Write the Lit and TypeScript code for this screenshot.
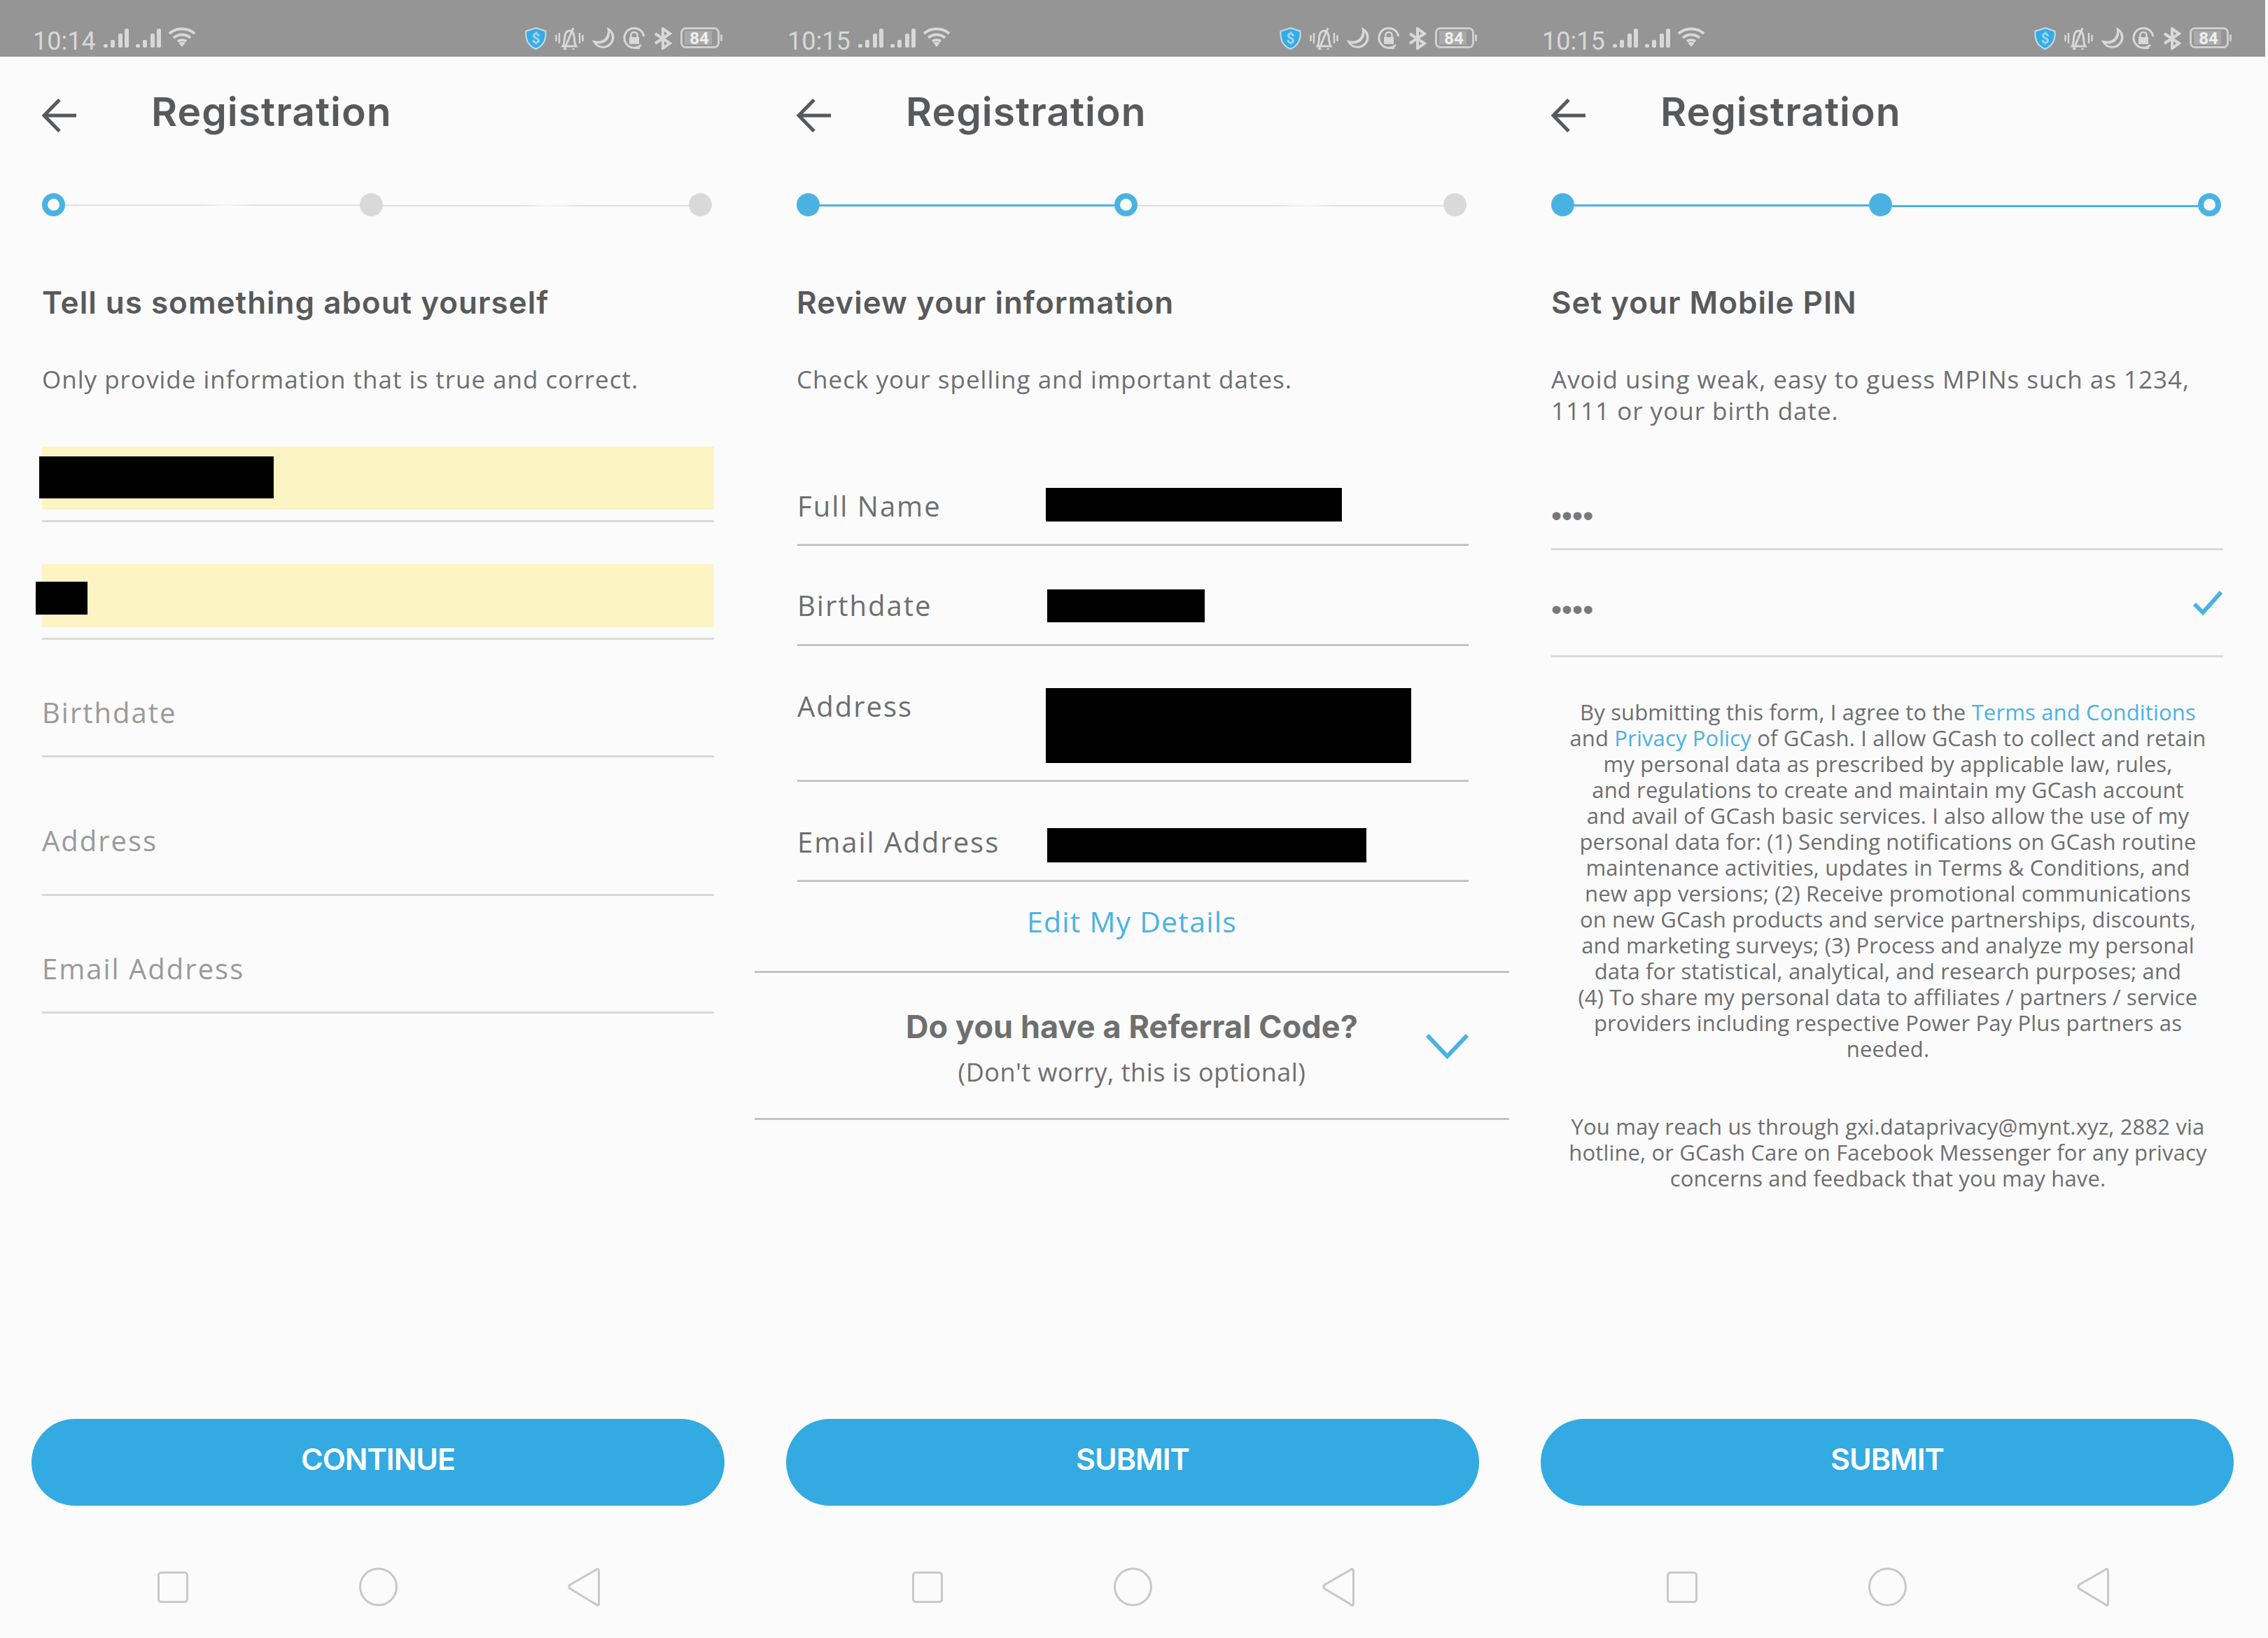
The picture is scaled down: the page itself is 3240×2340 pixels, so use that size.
import { LitElement, html, svg, css } from 'lit';
import { customElement } from 'lit/decorators.js';

interface ReviewRow {
  label: string;
  height: number;
  labelTop: number;
  barLeft: number;
  barTop: number;
  barWidth: number;
  barHeight: number;
}

const REVIEW_ROWS: ReviewRow[] = [
  { label: 'Full Name', height: 101, labelTop: 20, barLeft: 355, barTop: 18, barWidth: 423, barHeight: 48 },
  { label: 'Birthdate', height: 143, labelTop: 61, barLeft: 357, barTop: 62, barWidth: 225, barHeight: 47 },
  { label: 'Address', height: 194, labelTop: 62, barLeft: 355, barTop: 60, barWidth: 522, barHeight: 107 },
  { label: 'Email Address', height: 143, labelTop: 62, barLeft: 357, barTop: 66, barWidth: 456, barHeight: 49 },
];

const signal = html`<svg width="36" height="27" viewBox="0 0 36 27" fill="#d8d8d8">
  <rect x="0" y="22" width="6" height="5" rx="2"></rect>
  <rect x="10" y="16" width="6" height="11" rx="2"></rect>
  <rect x="21" y="7" width="6" height="20" rx="2"></rect>
  <rect x="30" y="0" width="6" height="27" rx="2"></rect>
</svg>`;

const wifi = html`<svg width="40" height="28" viewBox="0 0 40 28" fill="none" stroke="#d8d8d8" stroke-width="4">
  <path d="M2 9C12 0 28 0 38 9"></path>
  <path d="M8 15C15 9 25 9 32 15"></path>
  <path d="M14 20C17.500 17.500 22.500 17.500 26 20"></path>
  <path d="M15.500 22.500L20 28L24.500 22.500C22 20.500 18 20.500 15.500 22.500Z" fill="#d8d8d8" stroke="none"></path>
</svg>`;

const shield = html`<svg class="shield" width="31" height="32" viewBox="0 0 31 32">
  <path d="M15.500 1L29.500 5.500C30.500 17 26 26.500 15.500 31C5 26.500 0.500 17 1.500 5.500Z" fill="#36ace4" stroke="#c4dcea" stroke-width="2"></path>
  <text x="15.500" y="23" text-anchor="middle" class="shield-glyph">$</text>
</svg>`;

const bell = html`<svg width="41" height="33" viewBox="0 0 41 33" fill="none" stroke="#d8d8d8" stroke-width="3">
  <path d="M1.500 11V20M6 8V23M39.500 11V20M35 8V23" stroke-width="2.500"></path>
  <path d="M11 27C14 22 13 17 14 12C15 7 18 5 20.500 5C23 5 26 7 27 12C28 17 27 22 30 27Z"></path>
  <path d="M26 1L13 32M15 30V32M26 30V32"></path>
</svg>`;

const moon = html`<svg width="32" height="30" viewBox="0 0 32 30">
  <path d="M21 0C29 3 33 11 31 18C29 26 21 31 13 29.500C7 28.500 2 24 0 18C7 21 15 20 19 15C22 11 23 5 21 0ZM25 6C26 11 24 16 20.500 19.500C16 23 11 24 6 23.500C9 26 14 27.500 18 26.500C24 25 28 20 28 15C28 12 27 9 25 6Z" fill="#d8d8d8"></path>
</svg>`;

const rotationLock = html`<svg width="32" height="31" viewBox="0 0 32 31" fill="none" stroke="#d8d8d8" stroke-width="3">
  <path d="M26 25A14 14 0 1 1 29.800 13"></path>
  <path d="M24 29A14 14 0 0 1 16 30"></path>
  <path d="M11.500 14V11C11.500 8.500 13.500 7 16 7C18.500 7 20.500 8.500 20.500 11V14" stroke-width="2.500"></path>
  <rect x="9" y="14" width="14" height="10" fill="#d8d8d8" stroke="none"></rect>
</svg>`;

const bluetooth = html`<svg width="26" height="32" viewBox="0 0 26 32" fill="none" stroke="#d8d8d8" stroke-width="4">
  <path d="M2 9L23 23L13 30V2L23 9L2 23"></path>
</svg>`;

const battery = html`<svg width="60" height="30" viewBox="0 0 60 30">
  <rect x="1.500" y="1.500" width="53" height="27" rx="6" fill="none" stroke="#cfcfcf" stroke-width="3"></rect>
  <rect x="6" y="5" width="39" height="20" fill="#a9a9a9"></rect>
  <rect x="57" y="10" width="3" height="10" rx="1.500" fill="#cfcfcf"></rect>
  <text x="27" y="23.500" text-anchor="middle" class="battery-level">84</text>
</svg>`;

const backArrow = html`<svg class="back" width="49" height="48" viewBox="0 0 49 48" fill="none" stroke="#58595b" stroke-width="5">
  <path d="M3 24H49"></path>
  <path d="M25 1.500L3 24L25 46.500"></path>
</svg>`;

const navIcons = svg`
  <rect x="226.500" y="26.500" width="41" height="42" rx="4"></rect>
  <circle cx="540.500" cy="47" r="26"></circle>
  <path d="M855.500 25V71C855.500 74 853 74 851.500 72L815 50C812 47.500 812 46 815 43.500L851.500 22.500C853 20.500 855.500 21 855.500 25Z"></path>
`;

@customElement('app-root')
export class AppRoot extends LitElement {
  static styles = css`
    :host {
      display: block;
      width: 3240px;
      height: 2340px;
      overflow: hidden;
      background: #fbfbfb;
      font-family: 'Open Sans', sans-serif;
      color: #6d6e71;
    }

    .screens {
      display: flex;
      height: 2340px;
    }

    .screen {
      display: flex;
      flex-direction: column;
      flex: 0 0 1078px;
      height: 2340px;
    }

    .screen.last {
      flex-basis: 1080px;
    }

    .status {
      display: flex;
      height: 81px;
      box-sizing: border-box;
      padding: 39px 46px 0 47px;
      background: #959595;
      align-items: flex-start;
    }

    .screen.last .status {
      padding-right: 48px;
    }

    .time {
      font: 400 36px/36px Roboto, sans-serif;
      color: #d8d8d8;
      margin: 2px 1px 0 0;
    }

    .status-left {
      display: flex;
      gap: 10px;
      margin-left: 10px;
    }

    .status-left svg:first-child {
      margin-top: 2px;
    }

    .status-left svg:nth-child(2) {
      margin-top: 2px;
    }

    .status-right {
      display: flex;
      gap: 12px;
      margin-left: auto;
    }

    .shield-glyph {
      font: 700 21px Roboto, sans-serif;
      fill: #a3d8f3;
    }

    .battery-level {
      font: 700 24px Roboto, sans-serif;
      fill: #efefef;
    }

    .appbar {
      display: flex;
      height: 120px;
      padding-left: 60px;
      box-sizing: border-box;
    }

    .back {
      margin-top: 60px;
    }

    .appbar h1 {
      margin: 39px 0 0 107px;
      font: 600 57px/80px Inter, sans-serif;
      letter-spacing: 1px;
      color: #58595b;
    }

    .stepper {
      display: flex;
      align-items: center;
      margin: 75px 0 0 60px;
      height: 33px;
    }

    .dot {
      flex: none;
      width: 33px;
      height: 33px;
      box-sizing: border-box;
      border-radius: 50%;
      background: #d9d9d9;
    }

    .dot.current {
      background: #fbfbfb;
      border: 8px solid #4ab2e3;
    }

    .dot.done {
      background: #4ab2e3;
    }

    .seg {
      flex: none;
      height: 2px;
      background: linear-gradient(90deg, #e0e0e0 45%, #f4f4f4 55%, #e0e0e0 65%);
    }

    .seg.first {
      width: 421px;
      margin-top: 1px;
    }

    .seg.second {
      width: 437px;
      margin-top: 3px;
    }

    .seg.done {
      height: 3px;
      background: #4ab2e3;
    }

    .intro {
      padding: 0 60px;
    }

    .intro h2 {
      margin: 93px 0 0;
      font: 600 44px/60px Inter, sans-serif;
      letter-spacing: 1px;
      color: #58595b;
    }

    .intro p {
      margin: 57px 0 0;
      font-size: 35px;
      line-height: 45px;
      letter-spacing: 1px;
    }

    .form {
      padding: 0 58px 0 60px;
    }

    .form.blank {
      margin-top: 74px;
    }

    .filled {
      position: relative;
      height: 90px;
      background: #fcf4c3;
    }

    .rule {
      height: 3px;
      margin: 15px 0 60px;
      background: #d9d9d9;
    }

    .rule.end {
      margin-bottom: 0;
    }

    .redact {
      background: #000;
    }

    .filled .redact {
      position: absolute;
    }

    .redact.name {
      left: -4px;
      top: 14px;
      width: 335px;
      height: 60px;
    }

    .redact.short {
      left: -9px;
      top: 25px;
      width: 74px;
      height: 47px;
    }

    .placeholder {
      display: flex;
      align-items: flex-end;
      box-sizing: border-box;
      font-size: 40px;
      line-height: 48px;
      letter-spacing: 2px;
      color: #9a9a9a;
      border-bottom: 3px solid #d9d9d9;
    }

    .placeholder.birth {
      height: 168px;
      padding-bottom: 37px;
    }

    .placeholder.address {
      height: 198px;
      padding-bottom: 52px;
    }

    .placeholder.email {
      height: 168px;
      padding-bottom: 37px;
    }

    .review {
      margin-top: 115px;
      padding: 0 58px 0 61px;
    }

    .review-row {
      display: flex;
      box-sizing: border-box;
      border-bottom: 3px solid #c4c4c4;
    }

    .review-label {
      position: absolute;
      font-size: 40px;
      line-height: 48px;
      letter-spacing: 2px;
      color: #6d6e71;
    }

    .edit {
      margin-top: 26px;
      font: 500 41px/60px 'Open Sans', sans-serif;
      letter-spacing: 1.2px;
      text-align: center;
      color: #4ab2e3;
    }

    .referral {
      display: grid;
      grid-template-columns: 1fr auto 1fr;
      height: 213px;
      margin-top: 41px;
      box-sizing: border-box;
      border-top: 3px solid #c4c4c4;
      border-bottom: 3px solid #c4c4c4;
    }

    .referral-text {
      text-align: center;
      padding-top: 47px;
    }

    .referral-text strong {
      display: block;
      font: 700 45px/60px Inter, sans-serif;
      letter-spacing: 0.1px;
      color: #6f6f6f;
    }

    .referral-text span {
      display: block;
      margin-top: 10px;
      font-size: 36px;
      line-height: 50px;
      letter-spacing: 0.5px;
      color: #6f6f6f;
    }

    .chevron {
      justify-self: end;
      margin: 87px 58px 0 0;
    }

    .pin {
      display: flex;
      justify-content: space-between;
      box-sizing: border-box;
      margin: 0 60px 0 60px;
      border-bottom: 3px solid #d9d9d9;
    }

    .pin.first {
      height: 177px;
      padding-top: 106px;
    }

    .pin.second {
      height: 153px;
      position: relative;
      padding-top: 63px;
    }

    .mask {
      font: 400 43px/43px 'Liberation Sans', sans-serif;
      color: #77787b;
    }

    .check {
      position: absolute;
      right: 0;
      top: 58px;
    }

    .legal {
      margin: 60px 40px 0 42px;
      font-size: 31px;
      line-height: 37px;
      letter-spacing: 0.15px;
      text-align: center;
    }

    .legal p {
      margin: 0 0 74px;
    }

    .legal a {
      color: #4ab2e3;
      text-decoration: none;
    }

    .spacer {
      flex: 1;
    }

    .action {
      flex: none;
      width: 990px;
      height: 124px;
      margin-left: 45px;
      padding: 0 0 10px;
      border: none;
      border-radius: 62px;
      background: #33aae1;
      color: #fff;
      font: 600 43px Inter, sans-serif;
      letter-spacing: -1px;
    }

    .nav {
      display: block;
      flex: none;
      margin-top: 69px;
      fill: none;
      stroke: #c8c8c8;
      stroke-width: 3;
    }
  `;

  private renderChrome(time: string) {
    return html`
      <div class="status">
        <span class="time">${time}</span>
        <div class="status-left">${signal}${signal}${wifi}</div>
        <div class="status-right">${shield}${bell}${moon}${rotationLock}${bluetooth}${battery}</div>
      </div>
      <div class="appbar">
        ${backArrow}
        <h1>Registration</h1>
      </div>
    `;
  }

  private renderStepper(step: number) {
    const dot = (i: number) =>
      html`<span class="dot ${i === step ? 'current' : i < step ? 'done' : ''}"></span>`;
    return html`
      <div class="stepper">
        ${dot(0)}
        <span class="seg first ${step > 0 ? 'done' : ''}"></span>
        ${dot(1)}
        <span class="seg second ${step > 1 ? 'done' : ''}"></span>
        ${dot(2)}
      </div>
    `;
  }

  private renderFooter(label: string) {
    return html`
      <div class="spacer"></div>
      <button class="action">${label}</button>
      <svg class="nav" width="1078" height="120" viewBox="0 0 1078 120">${navIcons}</svg>
    `;
  }

  private renderDetails() {
    return html`
      <section class="screen">
        ${this.renderChrome('10:14')}
        ${this.renderStepper(0)}
        <div class="intro">
          <h2>Tell us something about yourself</h2>
          <p>Only provide information that is true and correct.</p>
        </div>
        <div class="form blank">
          <div class="filled"><div class="redact name"></div></div>
          <div class="rule"></div>
          <div class="filled"><div class="redact short"></div></div>
          <div class="rule end"></div>
          <div class="placeholder birth">Birthdate</div>
          <div class="placeholder address">Address</div>
          <div class="placeholder email">Email Address</div>
        </div>
        ${this.renderFooter('CONTINUE')}
      </section>
    `;
  }

  private renderReview() {
    return html`
      <section class="screen">
        ${this.renderChrome('10:15')}
        ${this.renderStepper(1)}
        <div class="intro">
          <h2>Review your information</h2>
          <p>Check your spelling and important dates.</p>
        </div>
        <div class="review">
          ${REVIEW_ROWS.map(row => html`
            <div class="review-row" style="height:${row.height}px">
              <span class="review-label" style="margin-top:${row.labelTop}px">${row.label}</span>
              <div class="redact" style="margin:${row.barTop}px 0 0 ${row.barLeft}px;width:${row.barWidth}px;height:${row.barHeight}px"></div>
            </div>
          `)}
        </div>
        <div class="edit">Edit My Details</div>
        <div class="referral">
          <div></div>
          <div class="referral-text">
            <strong>Do you have a Referral Code?</strong>
            <span>(Don't worry, this is optional)</span>
          </div>
          <svg class="chevron" width="61" height="36" viewBox="0 0 61 36" fill="none" stroke="#4ab2e3" stroke-width="6">
            <path d="M2 2L30.500 32L59 2"></path>
          </svg>
        </div>
        ${this.renderFooter('SUBMIT')}
      </section>
    `;
  }

  private renderPin() {
    return html`
      <section class="screen last">
        ${this.renderChrome('10:15')}
        ${this.renderStepper(2)}
        <div class="intro">
          <h2>Set your Mobile PIN</h2>
          <p>Avoid using weak, easy to guess MPINs such as 1234,<br />1111 or your birth date.</p>
        </div>
        <div class="pin first"><span class="mask">••••</span></div>
        <div class="pin second">
          <span class="mask">••••</span>
          <svg class="check" width="44" height="35" viewBox="0 0 44 35" fill="none" stroke="#4ab2e3" stroke-width="6">
            <path d="M3 19L15 31L41 2"></path>
          </svg>
        </div>
        <div class="legal">
          <p>
            By submitting this form, I agree to the <a>Terms and Conditions</a><br />
            and <a>Privacy Policy</a> of GCash. I allow GCash to collect and retain<br />
            my personal data as prescribed by applicable law, rules,<br />
            and regulations to create and maintain my GCash account<br />
            and avail of GCash basic services. I also allow the use of my<br />
            personal data for: (1) Sending notifications on GCash routine<br />
            maintenance activities, updates in Terms &amp; Conditions, and<br />
            new app versions; (2) Receive promotional communications<br />
            on new GCash products and service partnerships, discounts,<br />
            and marketing surveys; (3) Process and analyze my personal<br />
            data for statistical, analytical, and research purposes; and<br />
            (4) To share my personal data to affiliates / partners / service<br />
            providers including respective Power Pay Plus partners as<br />
            needed.
          </p>
          <p>
            You may reach us through gxi.dataprivacy@mynt.xyz, 2882 via<br />
            hotline, or GCash Care on Facebook Messenger for any privacy<br />
            concerns and feedback that you may have.
          </p>
        </div>
        ${this.renderFooter('SUBMIT')}
      </section>
    `;
  }

  render() {
    return html`
      <div class="screens">
        ${this.renderDetails()}
        ${this.renderReview()}
        ${this.renderPin()}
      </div>
    `;
  }
}

declare global {
  interface HTMLElementTagNameMap {
    'app-root': AppRoot;
  }
}
